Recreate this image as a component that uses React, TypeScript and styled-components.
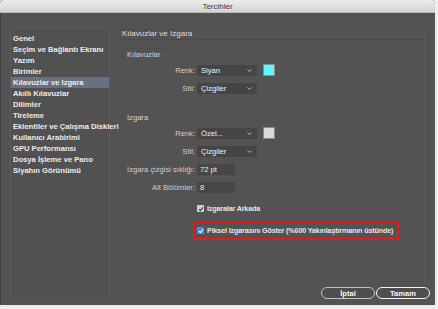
import React from 'react';
import styled, { createGlobalStyle } from 'styled-components';

const GlobalStyle = createGlobalStyle`
  html, body {
    margin: 0;
    padding: 0;
    background: #ededed;
  }
  body {
    font-family: 'Liberation Sans', Arial, sans-serif;
  }
`;

const Window = styled.div`
  width: 435px;
  height: 305px;
  background: #535353;
  display: flex;
  flex-direction: column;
  border-radius: 4px 4px 0 0;
  overflow: hidden;
  box-shadow: inset 1px 0 0 #3e3e3e;
`;

const TitleBar = styled.div`
  height: 13px;
  flex: none;
  background: linear-gradient(#ececec, #d4d4d4);
  border-bottom: 1px solid #b8b8b8;
  box-sizing: border-box;
  display: flex;
  align-items: center;
  justify-content: center;
  font-size: 8px;
  color: #3a3a3a;
`;

const Main = styled.div`
  flex: 1;
  display: flex;
  padding: 14px 5px 0 10px;
  gap: 7px;
`;

const Sidebar = styled.ul`
  list-style: none;
  margin: 0;
  padding: 5px 0 0;
  width: 100px;
  height: 271px;
  box-sizing: border-box;
  border: 1px solid #5b5b5b;
  background: #515151;
  display: flex;
  flex-direction: column;
`;

const SideItem = styled.li<{ $active?: boolean }>`
  height: 11px;
  line-height: 11px;
  padding-left: 2px;
  font-size: 7.6px;
  font-weight: bold;
  color: #ececec;
  white-space: nowrap;
  background: ${p => (p.$active ? '#697082' : 'transparent')};
`;

const RightColumn = styled.div`
  flex: 1;
  display: flex;
  flex-direction: column;
`;

const Panel = styled.div`
  margin: 2px 5px 0 0;
  height: 254px;
  box-sizing: border-box;
  border-top: 1px solid #4c4c4c;
  border-right: 1px solid #5c5c5c;
  display: flex;
  flex-direction: column;
`;

const PanelHeader = styled.div`
  height: 9px;
  padding: 0 5px;
  border-bottom: 1px solid #4a4a4a;
  font-size: 8px;
  line-height: 8px;
  color: #dcdcdc;
`;

const Group = styled.div<{ $gap: number }>`
  margin: ${p => p.$gap}px 5px 0;
  border: 1px solid #4d4d4d;
  border-radius: 2px;
  padding: 1px 0 7px;
`;

const GroupTitle = styled.div`
  height: 9px;
  line-height: 9px;
  padding-left: 4px;
  font-size: 7.6px;
  color: #d6d6d6;
  margin-bottom: 5px;
`;

const Form = styled.div`
  display: grid;
  grid-template-columns: 72px auto;
  column-gap: 2px;
  row-gap: 7px;
  align-items: center;
`;

const Label = styled.div`
  font-size: 7.6px;
  color: #cfcfcf;
  text-align: right;
  white-space: nowrap;
`;

const Controls = styled.div`
  display: flex;
  align-items: center;
  gap: 6px;
`;

const Select = styled.div`
  width: 60px;
  height: 11px;
  box-sizing: border-box;
  background: #454545;
  border-radius: 2px;
  display: flex;
  align-items: center;
  justify-content: space-between;
  padding: 0 5px 0 4px;
  font-size: 7.6px;
  color: #f2f2f2;
`;

const Input = styled.div`
  width: 38px;
  height: 11px;
  box-sizing: border-box;
  background: #464646;
  border-radius: 1px;
  display: flex;
  align-items: center;
  padding-left: 3px;
  font-size: 7.6px;
  color: #f2f2f2;
`;

const Swatch = styled.div<{ $color: string }>`
  width: 12px;
  height: 12px;
  box-sizing: border-box;
  background: ${p => p.$color};
  border: 1px solid #8a8a8a;
`;

const CheckRows = styled.div`
  display: flex;
  flex-direction: column;
  align-items: flex-start;
  gap: 3px;
  margin-top: 6px;
  padding-left: 70px;
`;

const CheckRow = styled.div<{ $highlight?: boolean }>`
  display: flex;
  align-items: center;
  gap: 3px;
  height: 15px;
  padding: 0 4px 0 2px;
  border: 2px solid ${p => (p.$highlight ? '#e41b1b' : 'transparent')};
  font-size: 7.2px;
  letter-spacing: -0.16px;
  font-weight: bold;
  color: #e6e6e6;
  white-space: nowrap;
`;

const Box = styled.span<{ $blue?: boolean }>`
  width: 7px;
  height: 7px;
  border-radius: 1px;
  background: ${p => (p.$blue ? '#3f8ff0' : '#d2d2d2')};
  display: inline-flex;
  align-items: center;
  justify-content: center;
`;

const ButtonRow = styled.div`
  display: flex;
  justify-content: flex-end;
  gap: 1px;
  margin-top: 4px;
`;

const PillButton = styled.div<{ $primary?: boolean }>`
  width: 54px;
  height: 12px;
  box-sizing: border-box;
  border-radius: 7px;
  border: ${p => (p.$primary ? '1.6px solid #f2f2f2' : '1.2px solid #c2c2c2')};
  background: #4f4f4f;
  display: flex;
  align-items: center;
  justify-content: center;
  font-size: 7.6px;
  font-weight: bold;
  color: #f4f4f4;
`;

const Chevron = () => (
  <svg width="5" height="3" viewBox="0 0 5 3">
    <path d="M0.5 0.5 L2.5 2.5 L4.5 0.5" fill="none" stroke="#c8c8c8" strokeWidth="0.9" />
  </svg>
);

const Check = ({ color }: { color: string }) => (
  <svg width="6" height="6" viewBox="0 0 6 6">
    <path d="M1 3.2 L2.4 4.6 L5 1.4" fill="none" stroke={color} strokeWidth="1.1" />
  </svg>
);

const sideItems = [
  'Genel',
  'Seçim ve Bağlantı Ekranı',
  'Yazım',
  'Birimler',
  'Kılavuzlar ve Izgara',
  'Akıllı Kılavuzlar',
  'Dilimler',
  'Tireleme',
  'Eklentiler ve Çalışma Diskleri',
  'Kullanıcı Arabirimi',
  'GPU Performansı',
  'Dosya İşleme ve Pano',
  'Siyahın Görünümü',
];

export default function App() {
  return (
    <>
      <GlobalStyle />
      <Window>
        <TitleBar>Tercihler</TitleBar>
        <Main>
          <Sidebar>
            {sideItems.map(item => (
              <SideItem key={item} $active={item === 'Kılavuzlar ve Izgara'}>
                {item}
              </SideItem>
            ))}
          </Sidebar>
          <RightColumn>
            <Panel>
              <PanelHeader>Kılavuzlar ve Izgara</PanelHeader>
              <Group $gap={8}>
                <GroupTitle>Kılavuzlar</GroupTitle>
                <Form>
                  <Label>Renk:</Label>
                  <Controls>
                    <Select>Siyan<Chevron /></Select>
                    <Swatch $color="#5ef8ff" />
                  </Controls>
                  <Label>Stil:</Label>
                  <Controls>
                    <Select>Çizgiler<Chevron /></Select>
                  </Controls>
                </Form>
              </Group>
              <Group $gap={9}>
                <GroupTitle>Izgara</GroupTitle>
                <Form>
                  <Label>Renk:</Label>
                  <Controls>
                    <Select>Özel...<Chevron /></Select>
                    <Swatch $color="#d9d9d9" />
                  </Controls>
                  <Label>Stil:</Label>
                  <Controls>
                    <Select>Çizgiler<Chevron /></Select>
                  </Controls>
                  <Label>Izgara çizgisi sıklığı:</Label>
                  <Controls>
                    <Input>72 pt</Input>
                  </Controls>
                  <Label>Alt Bölümler:</Label>
                  <Controls>
                    <Input>8</Input>
                  </Controls>
                </Form>
                <CheckRows>
                  <CheckRow>
                    <Box><Check color="#3c3c3c" /></Box>
                    Izgaralar Arkada
                  </CheckRow>
                  <CheckRow $highlight>
                    <Box $blue><Check color="#ffffff" /></Box>
                    Piksel Izgarasını Göster (%600 Yakınlaştırmanın üstünde)
                  </CheckRow>
                </CheckRows>
              </Group>
            </Panel>
            <ButtonRow>
              <PillButton>İptal</PillButton>
              <PillButton $primary>Tamam</PillButton>
            </ButtonRow>
          </RightColumn>
        </Main>
      </Window>
    </>
  );
}
